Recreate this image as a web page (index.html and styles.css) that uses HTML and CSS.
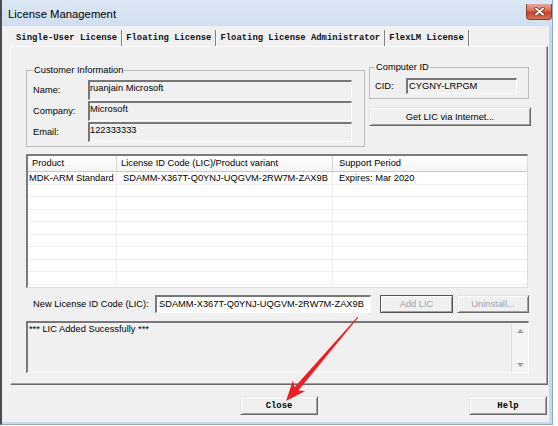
FILE: index.html
```html
<!DOCTYPE html>
<html lang="en">
<head>
    <meta charset="UTF-8">
    <title>License Management</title>
    <link rel="stylesheet" href="styles.css">
</head>
<body>
    <div class="window">
        <div class="titlebar">
            <span class="title">License Management</span>
            <button class="close-x" title="Close">
                <svg width="11" height="9" viewBox="0 0 11 9">
                    <path d="M2 1.5 L9 7.5 M9 1.5 L2 7.5" stroke="#6b1d12" stroke-width="3.2" stroke-linecap="round"/>
                    <path d="M2 1.5 L9 7.5 M9 1.5 L2 7.5" stroke="#fff" stroke-width="2" stroke-linecap="round"/>
                </svg>
            </button>
        </div>

        <div class="client">
            <!-- onglets -->
            <div class="tabs">
                <span class="tab active">Single-User License</span>
                <span class="tab">Floating License</span>
                <span class="tab">Floating License Administrator</span>
                <span class="tab">FlexLM License</span>
            </div>

            <div class="panel">
                <div class="top-row">
                    <fieldset class="group customer">
                        <legend>Customer Information</legend>
                        <div class="form-grid">
                            <label>Name:</label>
                            <div class="field ro">ruanjain Microsoft</div>
                            <label>Company:</label>
                            <div class="field ro">Microsoft</div>
                            <label>Email:</label>
                            <div class="field ro">122333333</div>
                        </div>
                    </fieldset>

                    <div class="computer">
                        <fieldset class="group cid-group">
                            <legend>Computer ID</legend>
                            <div class="cid-row">
                                <label>CID:</label>
                                <div class="field ro cid">CYGNY-LRPGM</div>
                            </div>
                        </fieldset>
                        <button class="btn get-lic">Get LIC via Internet...</button>
                    </div>
                </div>

                <!-- liste des licences -->
                <div class="listview">
                    <div class="lv-head">
                        <span>Product</span>
                        <span>License ID Code (LIC)/Product variant</span>
                        <span>Support Period</span>
                    </div>
                    <div class="lv-row">
                        <span>MDK-ARM Standard</span>
                        <span>SDAMM-X367T-Q0YNJ-UQGVM-2RW7M-ZAX9B</span>
                        <span>Expires: Mar 2020</span>
                    </div>
                    <div class="lv-row"><span></span><span></span><span></span></div>
                    <div class="lv-row"><span></span><span></span><span></span></div>
                    <div class="lv-row"><span></span><span></span><span></span></div>
                    <div class="lv-row"><span></span><span></span><span></span></div>
                    <div class="lv-row"><span></span><span></span><span></span></div>
                    <div class="lv-row"><span></span><span></span><span></span></div>
                    <div class="lv-row"><span></span><span></span><span></span></div>
                    <div class="lv-row"><span></span><span></span><span></span></div>
                </div>

                <div class="new-lic">
                    <label>New License ID Code (LIC):</label>
                    <div class="field lic-input">SDAMM-X367T-Q0YNJ-UQGVM-2RW7M-ZAX9B</div>
                    <button class="btn default disabled add-lic">Add LIC</button>
                    <button class="btn disabled uninstall">Uninstall...</button>
                </div>

                <div class="msgbox">
                    <div class="msg-text">*** LIC Added Sucessfully ***</div>
                    <div class="scrollbar">
                        <div class="sb-btn">
                            <svg width="7" height="4" viewBox="0 0 7 4"><polygon points="3.5,0 7,4 0,4" fill="#a6a6a6"/></svg>
                        </div>
                        <div class="sb-btn">
                            <svg width="7" height="4" viewBox="0 0 7 4"><polygon points="0,0 7,0 3.5,4" fill="#a6a6a6"/></svg>
                        </div>
                    </div>
                </div>
            </div>

            <div class="footer">
                <button class="btn mono close-btn">Close</button>
                <button class="btn mono help-btn">Help</button>
            </div>
        </div>
    </div>

    <!-- flèche rouge d'annotation -->
    <svg class="red-arrow" width="558" height="426" viewBox="0 0 558 426">
        <polygon points="358.4,317.3 298.3,390.5 305.1,391 286,401 292.9,380.6 294.5,387.3 357.6,316.7" fill="#ee1d23"/>
    </svg>
</body>
</html>
```

FILE: styles.css
```css
/* Base */
* {
    box-sizing: border-box;
}

body {
    margin: 0;
    width: 558px;
    height: 426px;
    overflow: hidden;
    position: relative;
    background-color: #fff;
    font-family: "Liberation Sans", Arial, sans-serif;
    font-size: 9.3px;
    color: #000;
}

/* Fenêtre */
.window {
    width: 553px;
    height: 425px;
    display: flex;
    flex-direction: column;
    background-color: #c6d8ee;
    border-left: 2px solid #4b4b4b;
    border-right: 1px solid #8ea8c8;
    border-bottom: 1px solid #8ea8c8;
}

.titlebar {
    height: 26px;
    flex: none;
    display: flex;
    justify-content: space-between;
    align-items: flex-start;
    padding-left: 6px;
    background: linear-gradient(#dce7f4, #d0def0);
}

.title {
    font-size: 11.3px;
    line-height: 28px;
}

.close-x {
    width: 26px;
    height: 16px;
    margin-top: 4px;
    padding: 0;
    display: flex;
    align-items: center;
    justify-content: center;
    border: 1px solid #8a3a2e;
    border-top: none;
    border-radius: 0 0 4px 4px;
    background: linear-gradient(#e9a99a, #d66a55 45%, #c6412c 55%, #d27458);
}

.client {
    flex: 1;
    margin: 0 3px 2px 0;
    padding-top: 4px;
    background-color: #f0f0f0;
    display: flex;
    flex-direction: column;
}

/* Onglets */
.tabs {
    display: flex;
    height: 16px;
    margin-left: 8px;
    font-family: "Liberation Mono", "Courier New", monospace;
    font-size: 8.9px;
    font-weight: bold;
    color: #111;
}

.tab {
    padding: 0 4px;
    line-height: 16px;
    border-right: 1px solid #808080;
    box-shadow: 1px 0 0 #fff;
    white-space: nowrap;
}

.tab:first-child {
    padding-left: 6px;
}

.panel {
    width: 538px;
    height: 339px;
    margin-left: 8px;
    padding: 14px 15px 0 15px;
    border-style: solid;
    border-width: 1px;
    border-color: #fff #696969 #696969 #fff;
    box-shadow: inset -1px -1px #a0a0a0;
}

/* Groupes */
.top-row {
    display: flex;
    gap: 4px;
    align-items: flex-start;
}

.group {
    margin: 0;
    min-width: 0;
    border: 1px solid #bcbcbc;
}

.group legend {
    padding: 0 1px;
    line-height: 12px;
}

.customer {
    width: 339px;
    margin-top: 3px;
    padding: 4px 12px 4px 6px;
}

.form-grid {
    display: grid;
    grid-template-columns: 55px 1fr;
    grid-auto-rows: 20px;
    row-gap: 1px;
    align-items: center;
}

.form-grid .field {
    align-self: stretch;
}

.field {
    line-height: 12px;
    white-space: nowrap;
    overflow: hidden;
    border-style: solid;
    border-width: 2px 1px 1px 2px;
    border-color: #777 #fbfbfb #fbfbfb #777;
    background-color: #fff;
}

.field.ro {
    background-color: #f0f0f0;
}

.computer {
    width: 162px;
}

.cid-group {
    width: 160px;
    padding: 5px 11px 4px 5px;
}

.cid-row {
    display: flex;
    align-items: center;
}

.cid-row label {
    width: 31px;
}

.cid {
    width: 111px;
    height: 16px;
    padding-left: 1px;
}

/* Boutons */
.btn {
    padding: 0;
    font: inherit;
    color: #000;
    background-color: #f0f0f0;
    border: 1px solid;
    border-color: #e3e3e3 #696969 #696969 #e3e3e3;
    box-shadow: inset 1px 1px #fff, inset -1px -1px #a0a0a0;
}

.btn.default {
    border-color: #555;
}

.btn.disabled {
    color: #a3a3a3;
}

.btn.mono {
    font-family: "Liberation Mono", "Courier New", monospace;
    font-size: 8.9px;
    font-weight: bold;
}

.get-lic {
    width: 162px;
    height: 19px;
    margin-top: 8px;
}

/* Liste */
.listview {
    width: 502px;
    height: 134px;
    margin-top: 7px;
    background-color: #fff;
    border-style: solid;
    border-width: 2px 1px 1px 2px;
    border-color: #7c7c7c #dcdcdc #dcdcdc #7c7c7c;
    overflow: hidden;
}

.lv-head,
.lv-row {
    display: grid;
    grid-template-columns: 89px 216px 1fr;
}

.lv-head {
    height: 16px;
    background: linear-gradient(#fff, #f4f4f4);
    border-bottom: 1px solid #c9c9c9;
}

.lv-head span {
    line-height: 15px;
    padding-left: 4px;
    border-right: 1px solid #d5d5d5;
    white-space: nowrap;
}

.lv-head span:last-child {
    padding-left: 6px;
    border-right: none;
}

.lv-row {
    height: 12.5px;
    border-bottom: 1px solid #efefef;
}

.lv-row span {
    line-height: 12px;
    padding-left: 6px;
    border-right: 1px solid #efefef;
    white-space: nowrap;
    overflow: hidden;
}

.lv-row span:first-child {
    padding-left: 1px;
}

.lv-row span:last-child {
    border-right: none;
}

/* Nouvelle licence */
.new-lic {
    display: flex;
    align-items: center;
    height: 18px;
    margin-top: 7px;
    padding-left: 7px;
}

.new-lic label {
    width: 122px;
    white-space: nowrap;
}

.lic-input {
    width: 216px;
    height: 18px;
    padding-left: 2px;
    line-height: 14px;
}

.add-lic {
    width: 73px;
    height: 18px;
    margin-left: 9px;
}

.uninstall {
    width: 72px;
    height: 18px;
    margin-left: 4px;
}

/* Zone de messages */
.msgbox {
    width: 503px;
    height: 52px;
    margin-top: 8px;
    display: flex;
    background-color: #f0f0f0;
    border-style: solid;
    border-width: 2px 1px 1px 2px;
    border-color: #777 #fbfbfb #fbfbfb #777;
}

.msg-text {
    flex: 1;
    padding-left: 1px;
    line-height: 12px;
}

.scrollbar {
    width: 17px;
    display: flex;
    flex-direction: column;
    justify-content: space-between;
    background-color: #f4f4f4;
    border-left: 1px solid #e0e0e0;
}

.sb-btn {
    height: 15px;
    display: flex;
    align-items: center;
    justify-content: center;
}

/* Pied */
.footer {
    display: grid;
    grid-template-columns: 1fr auto 1fr;
    width: 538px;
    margin-left: 8px;
    padding-top: 11px;
}

.close-btn {
    grid-column: 2;
    width: 78px;
    height: 19px;
}

.help-btn {
    grid-column: 3;
    justify-self: end;
    width: 78px;
    height: 19px;
    margin-right: 1px;
}

.red-arrow {
    position: absolute;
    top: 0;
    left: 0;
    pointer-events: none;
}
```
